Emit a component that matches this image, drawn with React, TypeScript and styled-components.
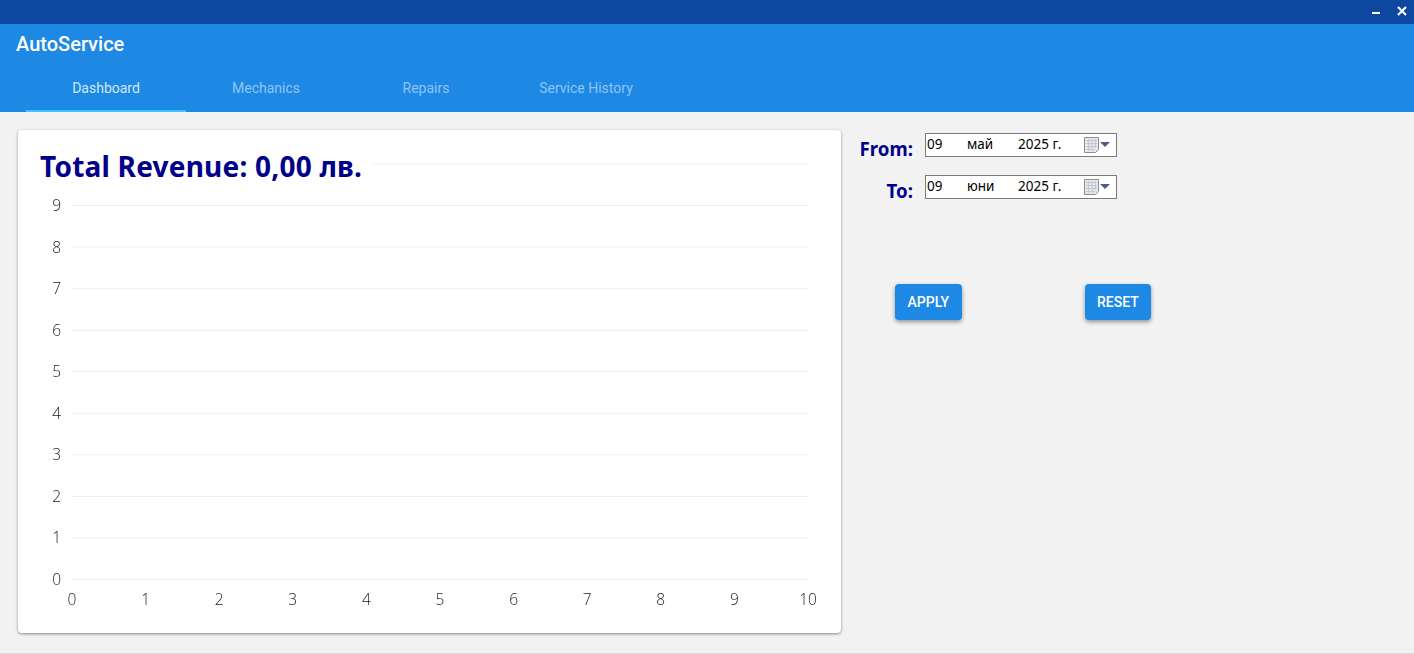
import * as React from 'react';
import styled, { createGlobalStyle } from 'styled-components';

const Y_TICKS = [9, 8, 7, 6, 5, 4, 3, 2, 1, 0];
const X_TICKS = [0, 1, 2, 3, 4, 5, 6, 7, 8, 9, 10];
const TABS = ['Dashboard', 'Mechanics', 'Repairs', 'Service History'];

function RevenueChart() {
	const left = 54;
	const right = 790;
	const step = 41.55;
	const yFor = (v: number) => 449 - v * step;
	const xFor = (v: number) => left + ((right - left) / 10) * v;
	return (
		<ChartSvg width={823} height={503} viewBox="0 0 823 503">
			<line x1={left} x2={right} y1={34} y2={34} stroke="#eeeeee" />
			{Y_TICKS.map((v) => (
				<g key={v}>
					<line x1={left} x2={right} y1={yFor(v) + 0.5} y2={yFor(v) + 0.5} stroke="#eeeeee" />
					<text x={43} y={yFor(v) + 6} textAnchor="end">{v}</text>
				</g>
			))}
			{X_TICKS.map((v) => (
				<text key={v} x={xFor(v)} y={475} textAnchor="middle">{v}</text>
			))}
		</ChartSvg>
	);
}

function CalendarIcon() {
	return (
		<svg width={28} height={16} viewBox="0 0 28 16">
			<path d="M0.5 0.5h14v12l-3 3h-11z" fill="#e6e8ec" stroke="#8d8d8d" />
			<path d="M2 3.5h11M2 6.5h11M2 9.5h11M2 12.5h9M4.5 2v12M8 2v12M11.5 2v9" stroke="#c3c7ce" fill="none" />
			<path d="M16 5h10l-5 5z" fill="#4a5d86" />
		</svg>
	);
}

function DateField(props: { day: string; month: string; year: string }) {
	return (
		<DateBox>
			<DatePart>{props.day}</DatePart>
			<DatePart>{props.month}</DatePart>
			<DatePart>{props.year}</DatePart>
			<CalendarIcon />
		</DateBox>
	);
}

export default function App() {
	return (
		<>
			<GlobalStyle />
			<Page>
				<TitleBar>
					<svg width={9} height={9} viewBox="0 0 9 9">
						<rect x={0} y={6} width={8} height={2} fill="#fff" />
					</svg>
					<svg width={10} height={10} viewBox="0 0 10 10">
						<path d="M1 1l8 8M9 1l-8 8" stroke="#fff" strokeWidth={2.2} fill="none" />
					</svg>
				</TitleBar>
				<Header>
					<Brand>AutoService</Brand>
					<TabRow>
						{TABS.map((t, i) => (
							<Tab key={t} $active={i === 0}>{t}</Tab>
						))}
					</TabRow>
				</Header>
				<Body>
					<Card>
						<CardTitle>Total Revenue: 0,00 лв.</CardTitle>
						<RevenueChart />
					</Card>
					<Filters>
						<FilterGrid>
							<FilterLabel>From:</FilterLabel>
							<DateField day="09" month="май" year="2025 г." />
							<FilterLabel>To:</FilterLabel>
							<DateField day="09" month="юни" year="2025 г." />
						</FilterGrid>
						<Actions>
							<ActionButton>Apply</ActionButton>
							<ActionButton>Reset</ActionButton>
						</Actions>
					</Filters>
				</Body>
			</Page>
		</>
	);
}

const GlobalStyle = createGlobalStyle`
	html, body {
		margin: 0;
		padding: 0;
		background: #f2f2f2;
	}
`;

const Page = styled.div`
	width: 1414px;
	height: 654px;
	box-sizing: border-box;
	display: flex;
	flex-direction: column;
	overflow: hidden;
	background: #f2f2f2;
	border-bottom: 1px solid #d9d9d9;
	font-family: Roboto, sans-serif;
`;

const TitleBar = styled.div`
	height: 24px;
	flex: none;
	display: flex;
	justify-content: flex-end;
	align-items: flex-start;
	gap: 16px;
	padding: 6px 7px 0 0;
	box-sizing: border-box;
	background: #0d47a1;
`;

const Header = styled.header`
	height: 88px;
	flex: none;
	display: flex;
	flex-direction: column;
	background: #1e88e5;
`;

const Brand = styled.div`
	height: 42px;
	padding: 8px 0 0 16px;
	box-sizing: border-box;
	font-size: 20px;
	font-weight: 500;
	line-height: 24px;
	color: #fff;
`;

const TabRow = styled.nav`
	display: flex;
	padding-left: 26px;
	flex: 1;
`;

const Tab = styled.div<{ $active?: boolean }>`
	width: 160px;
	display: flex;
	align-items: center;
	justify-content: center;
	box-sizing: border-box;
	font-size: 14px;
	color: ${(p) => (p.$active ? '#d2e7fa' : '#90c4f5')};
	border-bottom: 2px solid ${(p) => (p.$active ? '#40c4ff' : 'transparent')};
`;

const Body = styled.main`
	flex: 1;
	display: flex;
	align-items: flex-start;
	padding: 18px 0 0 18px;
`;

const Card = styled.section`
	position: relative;
	width: 823px;
	height: 503px;
	background: #fff;
	border-radius: 4px;
	box-shadow: 0 1px 3px rgba(0, 0, 0, 0.45);
`;

const CardTitle = styled.h1`
	position: absolute;
	z-index: 1;
	left: 22px;
	top: 17px;
	margin: 0;
	padding-right: 11px;
	background: #fff;
	font-family: "Noto Sans", sans-serif;
	font-size: 28px;
	font-weight: 700;
	letter-spacing: 0.22px;
	line-height: 38px;
	color: #00008b;
	white-space: nowrap;
`;

const ChartSvg = styled.svg`
	display: block;
	will-change: opacity;

	text {
		font-family: "Open Sans", sans-serif;
		font-weight: 300;
		font-size: 15.5px;
		fill: #222;
	}
`;

const Filters = styled.aside`
	display: flex;
	flex-direction: column;
	margin-left: 17px;
	padding-top: 3px;
`;

const FilterGrid = styled.div`
	display: grid;
	grid-template-columns: 56px 192px;
	grid-auto-rows: 24px;
	column-gap: 11px;
	row-gap: 18px;
	align-items: center;
`;

const FilterLabel = styled.label`
	text-align: right;
	font-family: "Noto Sans", sans-serif;
	font-size: 18.7px;
	font-weight: 700;
	line-height: 24px;
	padding: 8px 1px 0 0;
	color: #00008b;
	white-space: nowrap;
`;

const DateBox = styled.div`
	height: 24px;
	display: grid;
	grid-template-columns: 40px 51px 66px 28px;
	align-items: center;
	padding-left: 1px;
	box-sizing: border-box;
	background: #fff;
	border: 1px solid #7a7a7a;
`;

const DatePart = styled.span`
	font-family: "Noto Sans", sans-serif;
	font-size: 13.5px;
	line-height: 18px;
	padding-bottom: 2px;
	color: #000;
	white-space: nowrap;
`;

const Actions = styled.div`
	display: flex;
	gap: 123px;
	margin-top: 85px;
	padding-left: 37px;
`;

const ActionButton = styled.button`
	height: 36px;
	padding: 0 12.5px;
	border: none;
	border-radius: 4px;
	background: #1e88e5;
	color: #fff;
	font-family: Roboto, sans-serif;
	font-size: 14px;
	font-weight: 500;
	text-transform: uppercase;
	box-shadow: 0 2px 4px rgba(0, 0, 0, 0.4);
`;
